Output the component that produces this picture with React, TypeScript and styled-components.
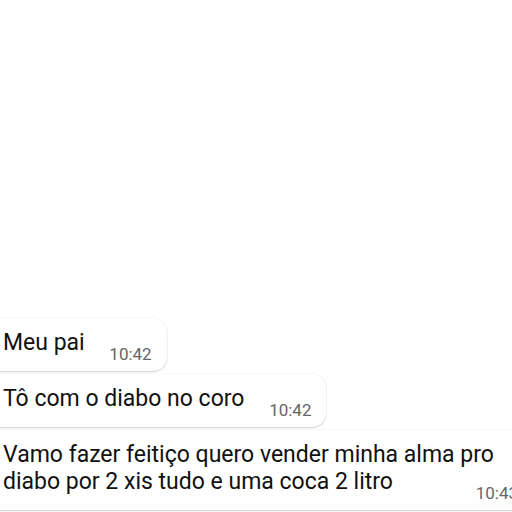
import { FC } from 'react'
import styled, { createGlobalStyle } from 'styled-components'

const GlobalStyle = createGlobalStyle`
    html, body {
        margin: 0;
        padding: 0;
        background: #ffffff;
    }
    body {
        height: 512px;
        overflow: hidden;
        font-family: Roboto, "Noto Sans", "Liberation Sans", sans-serif;
    }
`;

const Chat = styled.div`
    height: 512px;
    display: flex;
    flex-direction: column;
    align-items: flex-start;
    justify-content: flex-end;
    gap: 3px;
    padding-bottom: 2px;
    box-sizing: border-box;
`;

const Bubble = styled.div<{ $width?: number }>`
    display: grid;
    grid-template-areas: "cell";
    flex-shrink: 0;
    width: ${p => p.$width ? `${p.$width}px` : 'fit-content'};
    box-sizing: border-box;
    margin-left: -14px;
    padding: 11px 15px 7px 17px;
    background: #ffffff;
    border-radius: 14px;
    box-shadow: 0 1px 1.5px rgba(120, 100, 80, 0.28), 0 0 0 0.6px rgba(120, 100, 80, 0.08);
`;

const Text = styled.div`
    grid-area: cell;
    margin-bottom: 8px;
    font-size: 23px;
    line-height: 27px;
    color: #111111;
`;

// room kept at the end of the last line for the time
const Spacer = styled.span`
    display: inline-block;
    width: 67px;
    height: 1px;
`;

const Time = styled.span`
    grid-area: cell;
    justify-self: end;
    align-self: end;
    font-size: 17px;
    line-height: 20px;
    color: #666666;
`;

interface MessageProps {
    text: string
    time: string
    width?: number
}

const Message: FC<MessageProps> = ({ text, time, width }) => {
    return (
        <Bubble $width={width}>
            <Text>{text}<Spacer /></Text>
            <Time>{time}</Time>
        </Bubble>
    )
}

const messages: MessageProps[] = [
    { text: 'Meu pai', time: '10:42' },
    { text: 'Tô com o diabo no coro', time: '10:42' },
    { text: 'Vamo fazer feitiço quero vender minha alma pro diabo por 2 xis tudo e uma coca 2 litro', time: '10:43', width: 547 },
]

const App: FC = () => {
    return (
        <>
            <GlobalStyle />
            <Chat>
                {messages.map((m, i) => <Message key={i} {...m} />)}
            </Chat>
        </>
    )
}

export default App
